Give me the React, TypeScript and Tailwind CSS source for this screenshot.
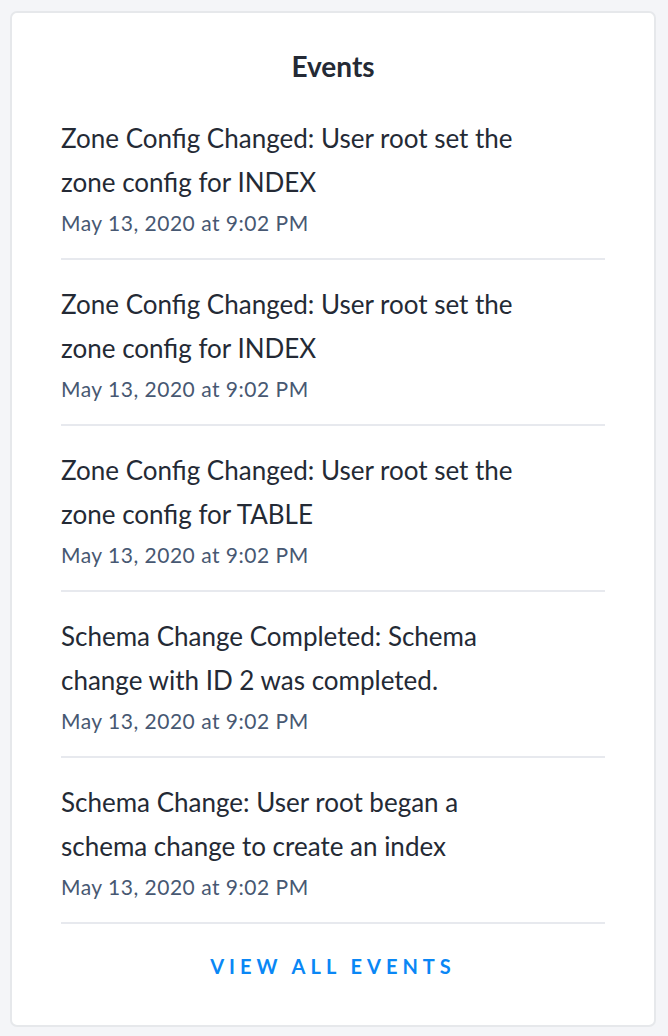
import React from 'react';

type EventItem = { text: string; time: string };

const events: EventItem[] = [
  { text: 'Zone Config Changed: User root set the zone config for INDEX', time: 'May 13, 2020 at 9:02 PM' },
  { text: 'Zone Config Changed: User root set the zone config for INDEX', time: 'May 13, 2020 at 9:02 PM' },
  { text: 'Zone Config Changed: User root set the zone config for TABLE', time: 'May 13, 2020 at 9:02 PM' },
  { text: 'Schema Change Completed: Schema change with ID 2 was completed.', time: 'May 13, 2020 at 9:02 PM' },
  { text: 'Schema Change: User root began a schema change to create an index', time: 'May 13, 2020 at 9:02 PM' },
];

const App: React.FC = () => {
  return (
    <div
      className="min-h-[1036px] w-[668px] bg-[#f4f5f8] px-[10px] pt-[11px]"
      style={{ fontFamily: '"Source Sans Pro", Lato, "Liberation Sans", sans-serif' }}
    >
      <div className="w-[646px] rounded-[7px] border-2 border-[#e6e8eb] bg-white px-[49px] pb-[45px]">
        <h2 className="pt-[38px] text-center text-[28px] font-bold leading-[30px] text-[#242a35]">Events</h2>
        <ul className="mt-[13px]">
          {events.map((e, i) => (
            <li key={i} className="border-b-2 border-[#e7e9ee] pt-[22px] pb-[20px]">
              <p className="max-w-[470px] text-[26px] leading-[44px] text-[#242a35]">{e.text}</p>
              <p className="mt-[4px] text-[21px] leading-[30px] tracking-[0.5px] text-[#475872]">{e.time}</p>
            </li>
          ))}
        </ul>
        <div className="pt-[28px] text-center">
          <a className="text-[20px] font-bold leading-[28px] tracking-[5px] text-[#0a87f5]" href="#">
            VIEW ALL EVENTS
          </a>
        </div>
      </div>
    </div>
  );
};

export default App;
